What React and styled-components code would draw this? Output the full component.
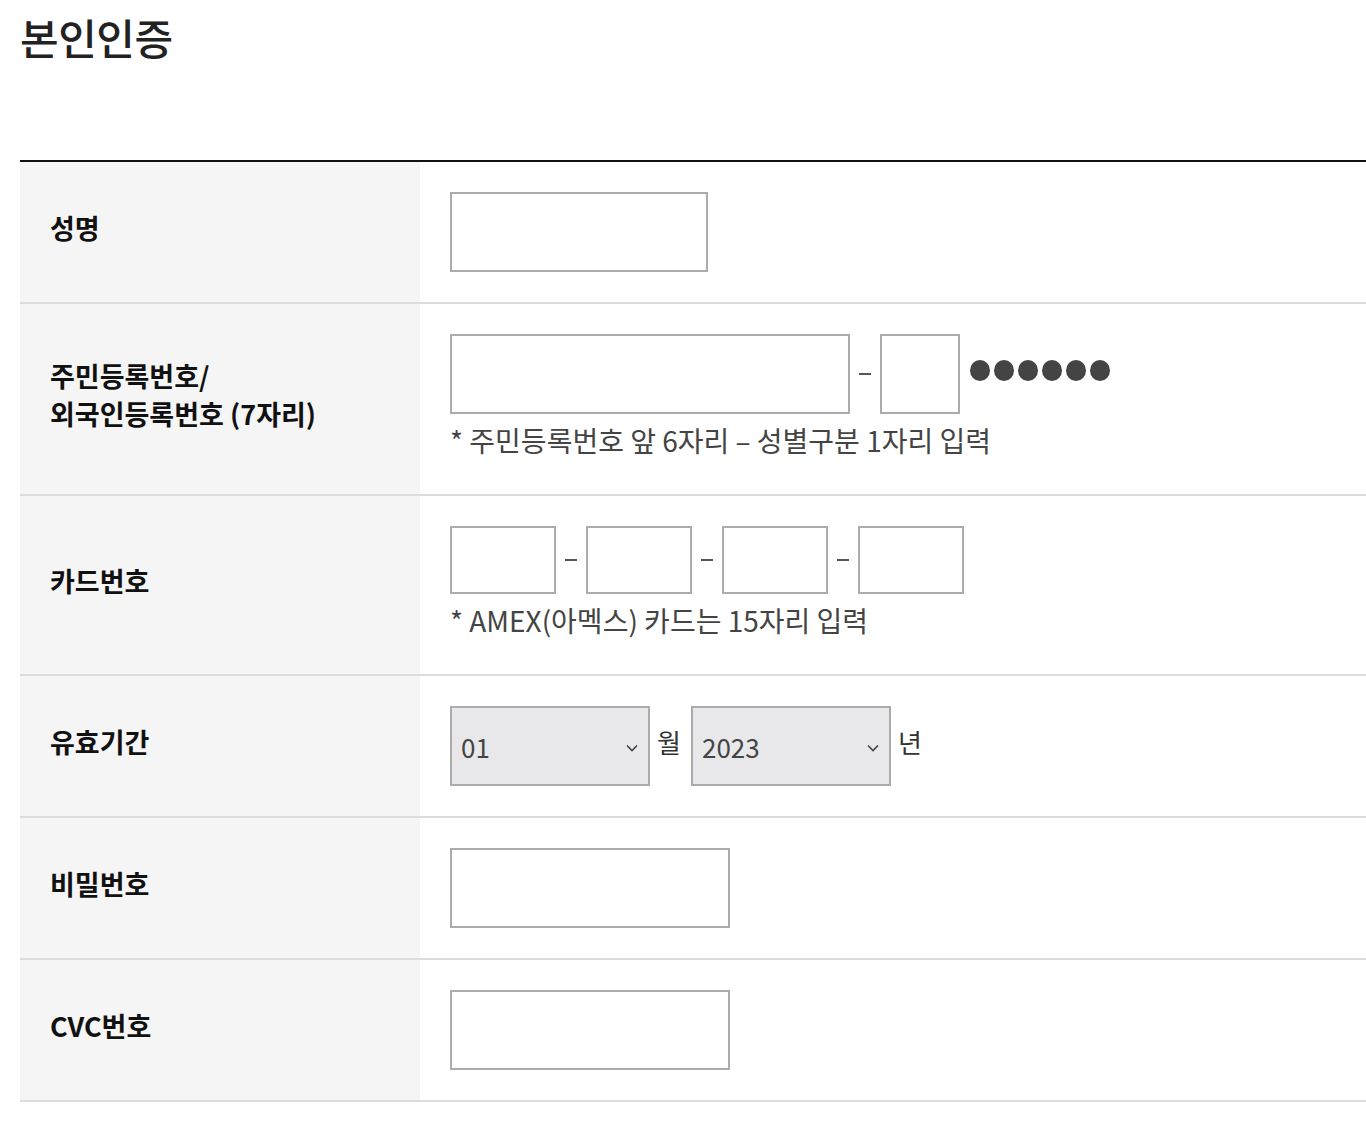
import styled, { createGlobalStyle } from "styled-components";

const GlobalStyle = createGlobalStyle`
  html, body {
    margin: 0;
    padding: 0;
    background: #fff;
  }
  body {
    font-family: "Noto Sans CJK KR", "Noto Sans", sans-serif;
    color: #222;
  }
  * { box-sizing: border-box; }
`;

const Page = styled.div`
  padding: 0 0 0 20px;
  width: 1366px;
`;

const Title = styled.h1`
  margin: 12px 0 98px;
  font-size: 42px;
  line-height: 50px;
  font-weight: 500;
  color: #222;
  letter-spacing: -0.5px;
`;

const Table = styled.div`
  border-top: 2px solid #111;
`;

const Row = styled.div`
  display: flex;
  border-bottom: 2px solid #dcdcdc;
`;

const Label = styled.div`
  width: 400px;
  flex: none;
  background: #f5f5f5;
  display: flex;
  align-items: center;
  padding: 0 30px 8px;
  font-size: 27px;
  line-height: 38px;
  font-weight: 700;
  color: #111;
`;

const Cell = styled.div`
  flex: 1;
  padding: 30px;
`;

const Line = styled.div`
  display: flex;
  align-items: center;
  gap: ${(p) => p.$gap ?? 0}px;
`;

const Input = styled.input`
  width: ${(p) => p.$w}px;
  height: ${(p) => p.$h || 80}px;
  border: 2px solid #ababab;
  background: #fff;
  border-radius: 0;
  padding: 0 10px;
  font-size: 24px;
  outline: none;
  flex: none;
`;

const Dash = styled.span`
  width: 12px;
  height: 2px;
  background: #555;
  flex: none;
  margin: 0 9px;
`;

const Dots = styled.div`
  display: flex;
  gap: 4px;
  margin-left: 10px;
  margin-top: -8px;
`;

const Dot = styled.span`
  width: 20px;
  height: 21px;
  border-radius: 50%;
  background: #444;
`;

const Note = styled.p`
  margin: 3px 0 0;
  font-size: 28px;
  line-height: 47px;
  color: #444;
`;

const SelectBox = styled.div`
  position: relative;
  width: 200px;
  height: 80px;
  flex: none;
`;

const Select = styled.select`
  appearance: none;
  -webkit-appearance: none;
  width: 100%;
  height: 100%;
  border: 2px solid #ababab;
  border-radius: 0;
  background: #e8e8ea;
  padding: 0 0 0 9px;
  font-family: "Noto Sans CJK KR", "Noto Sans", sans-serif;
  font-size: 26px;
  color: #444;
  outline: none;
`;

const Chevron = styled.svg`
  position: absolute;
  right: 11px;
  top: 37px;
  pointer-events: none;
`;

const Unit = styled.span`
  width: 27px;
  font-size: 26px;
  line-height: 40px;
  color: #333;
  align-self: flex-start;
  margin-top: 16px;
`;

function DateSelect({ value, options }) {
  return (
    <SelectBox>
      <Select defaultValue={value}>
        {options.map((o) => (
          <option key={o} value={o}>{o}</option>
        ))}
      </Select>
      <Chevron width="14" height="10" viewBox="0 0 14 10">
        <path d="M2 2.5 L7 7.5 L12 2.5" fill="none" stroke="#444" strokeWidth="1.6" />
      </Chevron>
    </SelectBox>
  );
}

const months = Array.from({ length: 12 }, (_, i) => String(i + 1).padStart(2, "0"));
const years = Array.from({ length: 10 }, (_, i) => String(2023 + i));

export default function App() {
  return (
    <>
      <GlobalStyle />
      <Page>
        <Title>본인인증</Title>
        <Table>
          <Row>
            <Label>성명</Label>
            <Cell>
              <Input $w={258} />
            </Cell>
          </Row>
          <Row>
            <Label>
              주민등록번호/
              <br />
              외국인등록번호 (7자리)
            </Label>
            <Cell>
              <Line>
                <Input $w={400} />
                <Dash />
                <Input $w={80} />
                <Dots>
                  {[0, 1, 2, 3, 4, 5].map((i) => (
                    <Dot key={i} />
                  ))}
                </Dots>
              </Line>
              <Note>* 주민등록번호 앞 6자리 – 성별구분 1자리 입력</Note>
            </Cell>
          </Row>
          <Row>
            <Label>카드번호</Label>
            <Cell>
              <Line>
                <Input $w={106} $h={68} />
                <Dash />
                <Input $w={106} $h={68} />
                <Dash />
                <Input $w={106} $h={68} />
                <Dash />
                <Input $w={106} $h={68} />
              </Line>
              <Note>* AMEX(아멕스) 카드는 15자리 입력</Note>
            </Cell>
          </Row>
          <Row>
            <Label>유효기간</Label>
            <Cell>
              <Line $gap={7}>
                <DateSelect value="01" options={months} />
                <Unit>월</Unit>
                <DateSelect value="2023" options={years} />
                <Unit>년</Unit>
              </Line>
            </Cell>
          </Row>
          <Row>
            <Label>비밀번호</Label>
            <Cell>
              <Input $w={280} type="password" />
            </Cell>
          </Row>
          <Row>
            <Label>CVC번호</Label>
            <Cell>
              <Input $w={280} />
            </Cell>
          </Row>
        </Table>
      </Page>
    </>
  );
}
